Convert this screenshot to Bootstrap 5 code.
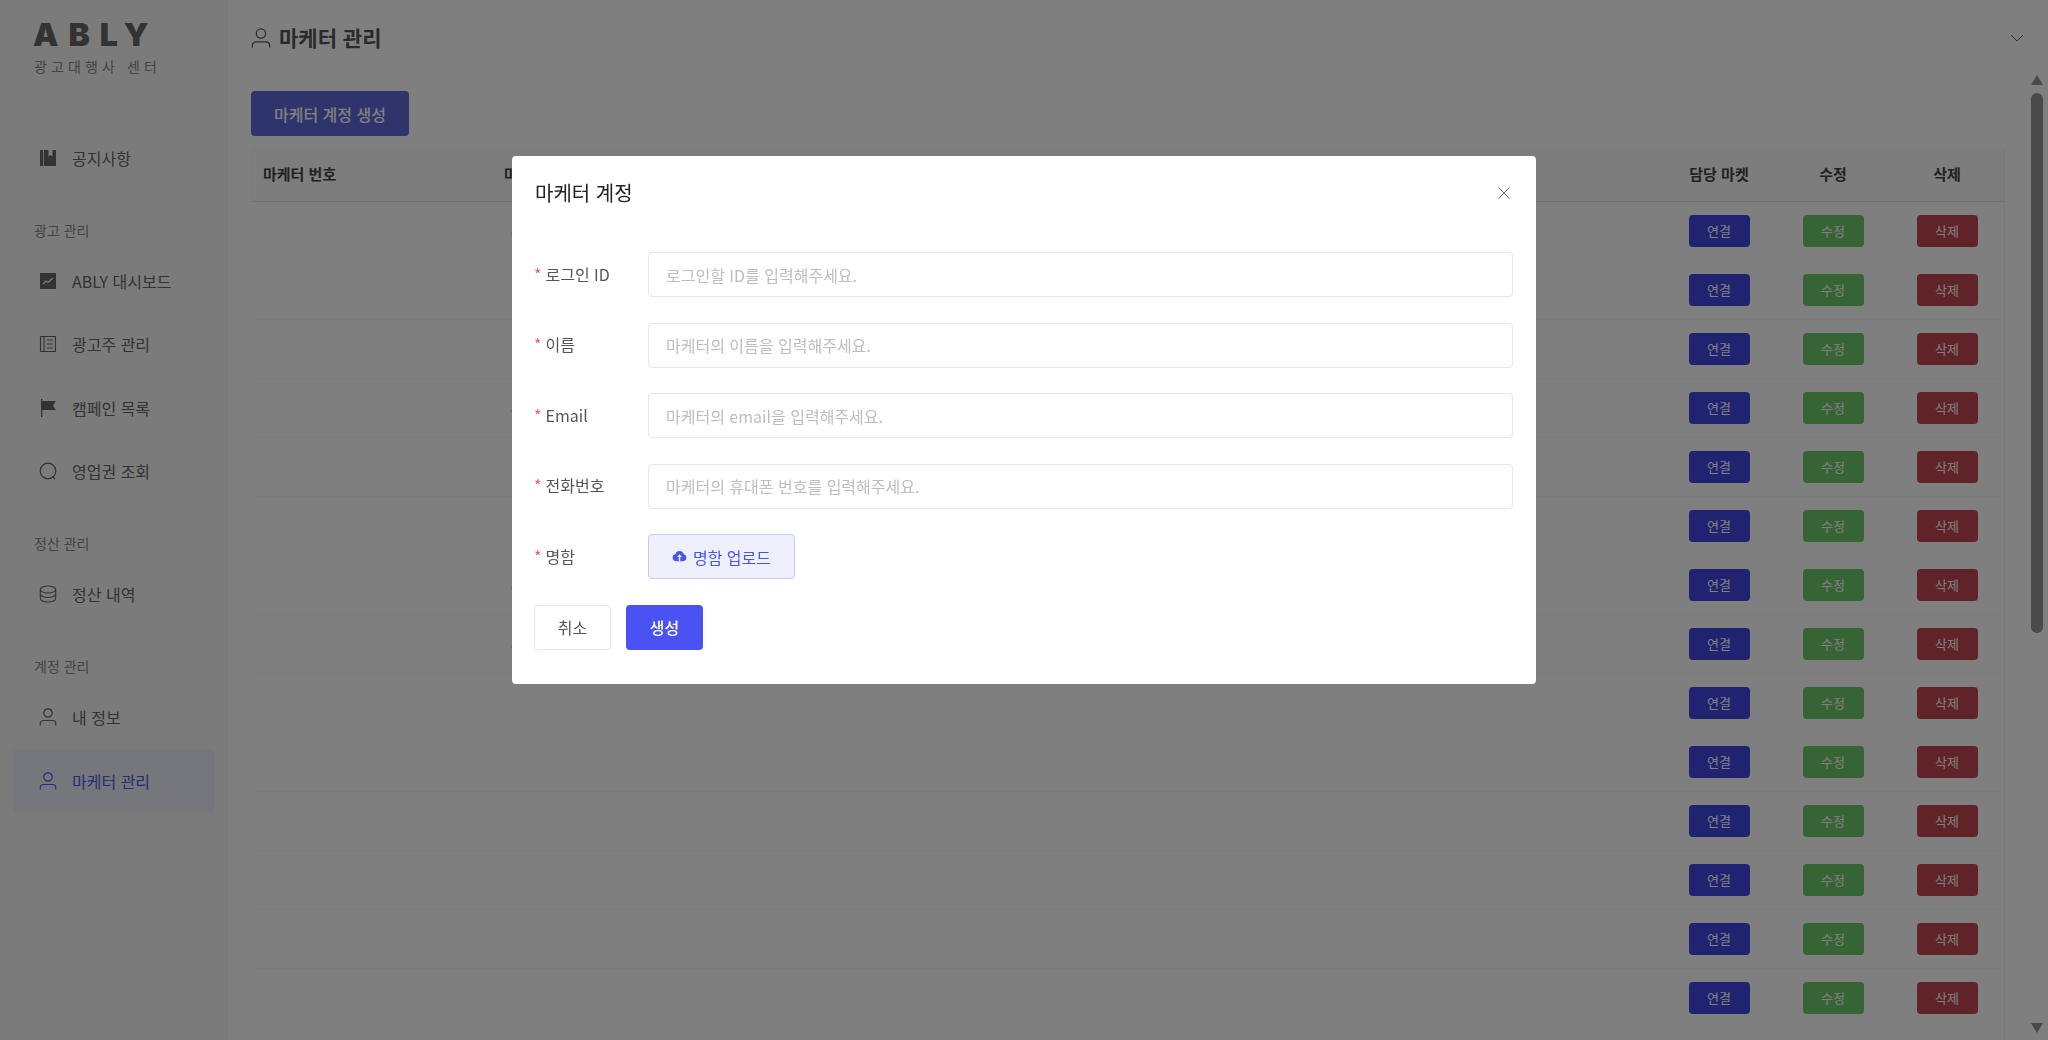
<!DOCTYPE html>
<html lang="ko">
<head>
  <meta charset="UTF-8"/>
  <meta name="viewport" content="width=device-width, initial-scale=1.0"/>
  <title>ABLY - 마케터 관리</title>
  <link href="https://cdn.jsdelivr.net/npm/bootstrap@5.3.0/dist/css/bootstrap.min.css" rel="stylesheet"/>
  <style>
    body {
      font-family: "Noto Sans CJK KR", "Noto Sans", sans-serif;
      height: 100vh;
      overflow: hidden;
      background: #fff;
      color: #555;
    }

    /* sidebar */
    .side-panel {
      width: 228px;
      flex-shrink: 0;
      background: #f7f7f8;
      height: 100vh;
    }
    .brand-block { height: 126px; padding: 18px 0 0 33px; }
    .brand-logo {
      font-family: Inter, sans-serif;
      font-weight: 900;
      font-size: 32px;
      line-height: 34px;
      letter-spacing: 10px;
      color: #666;
    }
    .brand-sub {
      font-size: 14px;
      line-height: 20px;
      letter-spacing: 4.1px;
      margin: 4px 0 0 1px;
      color: #888;
    }
    .menu-label {
      height: 59.2px;
      padding: 30px 0 0 34px;
      font-size: 14px;
      line-height: 20px;
      color: #888;
    }
    .menu-entry {
      height: 63.6px;
      padding-left: 39px;
      font-size: 16px;
      color: #666;
      gap: 15px;
    }
    .menu-entry svg { width: 18px; height: 18px; flex-shrink: 0; }
    .menu-entry.is-active {
      background: #eceefb;
      color: #5058e8;
      margin: 0 13px;
      padding-left: 26px;
      border-radius: 4px;
    }

    /* main */
    .top-bar { height: 75px; padding: 0 24px 0 23px; }
    .page-title { font-size: 21px; font-weight: 700; color: #555; gap: 8px; }
    .page-title svg { width: 20px; height: 20px; }
    .top-chevron { width: 14px; height: 14px; color: #666; }
    .content-area { padding-left: 23px; }
    .create-btn {
      height: 45px;
      width: 158px;
      margin-top: 16px;
      padding: 0;
      font-size: 16px;
      font-weight: 500;
      background: #6068d8;
      border: 0;
      border-radius: 4px;
      color: #fff;
    }
    .table-wrap {
      width: 1754px;
      margin-top: 12px;
      border-right: 1px solid #f0f0f0;
    }
    .mkt-table { table-layout: fixed; width: 1753px; border-color: #f8f8f8; }
    .mkt-table th {
      --bs-table-bg: #fafafa;
      height: 53px;
      padding: 0 12px;
      font-size: 15px;
      font-weight: 700;
      color: #444;
      vertical-align: middle;
      border-color: #e8e8e8;
    }
    .mkt-table td {
      height: 59px;
      padding: 0;
      font-size: 14px;
      color: #555;
      text-align: center;
      vertical-align: middle;
    }
    .mkt-table td.id-cell { padding-left: 19px; text-align: left; }
    .row-btn {
      width: 61px;
      height: 32px;
      padding: 0;
      font-size: 13px;
      border: 0;
      border-radius: 4px;
      color: #fff;
    }
    .row-btn-link { background: #4048e0; }
    .row-btn-edit { background: #6fc868; }
    .row-btn-del { background: #c04650; }

    /* fake scrollbar */
    .scroll-rail { width: 12px; margin: 0 5px 0 26px; }
    .arrow-up, .arrow-down {
      width: 0;
      height: 0;
      border-left: 6px solid transparent;
      border-right: 6px solid transparent;
    }
    .arrow-up { border-bottom: 10px solid #949494; }
    .arrow-down { border-top: 10px solid #949494; margin-top: 390px; }
    .scroll-thumb { height: 540px; margin-top: 8px; background: #949494; border-radius: 6px; }

    /* modal */
    .acct-dialog { max-width: 1024px; margin: 156px auto 0; }
    .acct-content { border: 0; border-radius: 4px; }
    .acct-head { height: 72px; padding: 2px 24px 0 23px; border: 0; }
    .acct-title { font-size: 20px; font-weight: 400; color: #222; }
    .acct-close { width: 16px; height: 16px; padding: 0; background: none; border: 0; color: #666; }
    .acct-body { padding: 24px 23px 34px 22px; }
    .field-row { margin-bottom: 25.5px; }
    .field-label { width: 114px; flex-shrink: 0; font-size: 16px; line-height: 22px; padding-bottom: 2px; color: #555; margin: 0; }
    .field-label i { font-style: normal; color: #e35d6a; margin-right: 4px; }
    .field-input {
      height: 45px;
      font-size: 16px;
      padding: 0 17px;
      border-color: #e6e6e6;
      border-radius: 4px;
    }
    .field-input::placeholder { color: #bdbdbd; }
    .upload-btn {
      height: 45px;
      width: 147px;
      padding: 0;
      font-size: 16px;
      background: #eef0fe;
      border: 1px solid #c6caf6;
      border-radius: 4px;
      color: #4a52f0;
      gap: 6px;
    }
    .form-actions { gap: 15px; }
    .cancel-btn, .save-btn { height: 45px; padding: 0; font-size: 16px; border-radius: 4px; }
    .cancel-btn { width: 77px; background: #fff; border: 1px solid #e6e6e6; color: #555; }
    .save-btn { width: 77px; background: #4a52f4; border: 0; color: #fff; font-weight: 500; }
  </style>
</head>
<body class="d-flex">
  <!-- Sidebar -->
  <aside class="side-panel">
    <div class="brand-block">
      <div class="brand-logo">ABLY</div>
      <div class="brand-sub">광고대행사 센터</div>
    </div>
    <div class="menu-entry d-flex align-items-center">
      <svg viewBox="0 0 18 18" fill="currentColor"><path d="M1 1h3.2v16H1zM5 1h4.5v6.5l2-1.5 2 1.5V1H17v16H5z"/></svg>공지사항
    </div>
    <div class="menu-label">광고 관리</div>
    <div class="menu-entry d-flex align-items-center">
      <svg viewBox="0 0 18 18"><path fill="currentColor" d="M1 1h16v16H1z"/><path fill="none" stroke="#f7f7f8" stroke-width="1.2" d="M4 12l3-3 2 1.5L14 6"/></svg>ABLY 대시보드
    </div>
    <div class="menu-entry d-flex align-items-center">
      <svg viewBox="0 0 18 18" fill="none" stroke="currentColor" stroke-width="1.1"><path d="M1.5 1.5h15v15h-15zM5 1.5v15M8 5h6M8 9h6M8 13h6"/></svg>광고주 관리
    </div>
    <div class="menu-entry d-flex align-items-center">
      <svg viewBox="0 0 18 18" fill="currentColor"><path d="M2 0h1.3v18H2zM3.3 2H17l-3 4.5L17 11H3.3z"/></svg>캠페인 목록
    </div>
    <div class="menu-entry d-flex align-items-center">
      <svg viewBox="0 0 18 18" fill="none" stroke="currentColor" stroke-width="1.2"><circle cx="9" cy="9" r="7.8"/><path d="M13.5 14.5l2.5 2.5"/></svg>영업권 조회
    </div>
    <div class="menu-label">정산 관리</div>
    <div class="menu-entry d-flex align-items-center">
      <svg viewBox="0 0 18 18" fill="none" stroke="currentColor" stroke-width="1.1"><ellipse cx="9" cy="4.5" rx="7.7" ry="3.5"/><path d="M1.3 4.5v9c0 1.9 3.4 3.5 7.7 3.5s7.7-1.6 7.7-3.5v-9M1.3 9c0 1.9 3.4 3.5 7.7 3.5s7.7-1.6 7.7-3.5"/></svg>정산 내역
    </div>
    <div class="menu-label">계정 관리</div>
    <div class="menu-entry d-flex align-items-center">
      <svg viewBox="0 0 18 18" fill="none" stroke="currentColor" stroke-width="1.2"><circle cx="9" cy="5" r="4.2"/><path d="M1.2 17.5v-1.7c0-2 1.6-3.3 3.5-3.3h8.6c1.9 0 3.5 1.3 3.5 3.3v1.7"/></svg>내 정보
    </div>
    <div class="menu-entry is-active d-flex align-items-center">
      <svg viewBox="0 0 18 18" fill="none" stroke="currentColor" stroke-width="1.2"><circle cx="9" cy="5" r="4.2"/><path d="M1.2 17.5v-1.7c0-2 1.6-3.3 3.5-3.3h8.6c1.9 0 3.5 1.3 3.5 3.3v1.7"/></svg>마케터 관리
    </div>
  </aside>

  <!-- Main -->
  <main class="flex-grow-1 d-flex flex-column overflow-hidden">
    <div class="top-bar d-flex align-items-center justify-content-between">
      <h1 class="page-title d-flex align-items-center m-0">
        <svg viewBox="0 0 18 18" fill="none" stroke="currentColor" stroke-width="1.1"><circle cx="9" cy="5" r="4.2"/><path d="M1.2 17.5v-1.7c0-2 1.6-3.3 3.5-3.3h8.6c1.9 0 3.5 1.3 3.5 3.3v1.7"/></svg>
        마케터 관리
      </h1>
      <svg class="top-chevron" viewBox="0 0 14 14" fill="none" stroke="currentColor" stroke-width="1"><path d="M1 4l6 6 6-6"/></svg>
    </div>
    <div class="d-flex flex-grow-1 overflow-hidden content-area">
      <div class="d-flex flex-column align-items-start">
        <button class="btn create-btn">마케터 계정 생성</button>
        <div class="table-wrap flex-grow-1">
          <table class="table mkt-table mb-0">
            <colgroup>
              <col style="width: 241px"/><col style="width: 220px"/><col style="width: 300px"/><col style="width: 350px"/><col style="width: 300px"/><col style="width: 114px"/><col style="width: 114px"/><col style="width: 114px"/>
            </colgroup>
            <thead>
              <tr>
                <th>마케터 번호</th>
                <th>마케터 ID</th>
                <th>이름</th>
                <th>Email</th>
                <th>전화번호</th>
                <th class="text-center">담당 마켓</th>
                <th class="text-center">수정</th>
                <th class="text-center">삭제</th>
              </tr>
            </thead>
            <tbody id="marketer-rows"></tbody>
          </table>
        </div>
      </div>
      <div class="scroll-rail">
        <div class="arrow-up"></div>
        <div class="scroll-thumb"></div>
        <div class="arrow-down"></div>
      </div>
    </div>
  </main>

  <!-- Modal -->
  <div class="modal-backdrop show"></div>
  <div class="modal d-block" tabindex="-1">
    <div class="modal-dialog acct-dialog">
      <div class="modal-content acct-content">
        <div class="modal-header acct-head d-flex align-items-center justify-content-between">
          <h5 class="modal-title acct-title">마케터 계정</h5>
          <button class="acct-close d-flex" aria-label="닫기">
            <svg viewBox="0 0 16 16" width="16" height="16" fill="none" stroke="currentColor" stroke-width="1"><path d="M2.5 2.5l11 11M13.5 2.5l-11 11"/></svg>
          </button>
        </div>
        <div class="modal-body acct-body">
          <div class="field-row d-flex align-items-center">
            <label class="field-label"><i>*</i>로그인 ID</label>
            <input class="form-control field-input" placeholder="로그인할 ID를 입력해주세요."/>
          </div>
          <div class="field-row d-flex align-items-center">
            <label class="field-label"><i>*</i>이름</label>
            <input class="form-control field-input" placeholder="마케터의 이름을 입력해주세요."/>
          </div>
          <div class="field-row d-flex align-items-center">
            <label class="field-label"><i>*</i>Email</label>
            <input class="form-control field-input" placeholder="마케터의 email을 입력해주세요."/>
          </div>
          <div class="field-row d-flex align-items-center">
            <label class="field-label"><i>*</i>전화번호</label>
            <input class="form-control field-input" placeholder="마케터의 휴대폰 번호를 입력해주세요."/>
          </div>
          <div class="field-row d-flex align-items-center">
            <label class="field-label"><i>*</i>명함</label>
            <button class="btn upload-btn d-flex align-items-center justify-content-center">
              <svg viewBox="0 0 16 14" width="15" height="13" fill="currentColor"><path d="M8 1a4.6 4.6 0 0 1 4.4 3.5A3.8 3.8 0 0 1 12 12H4a3.8 3.8 0 0 1-.4-7.5A4.6 4.6 0 0 1 8 1z"/><path fill="#eef0fe" d="M8 4.5L5.3 7.6h1.9V12h1.6V7.6h1.9z"/></svg>
              명함 업로드
            </button>
          </div>
          <div class="form-actions d-flex">
            <button class="btn cancel-btn">취소</button>
            <button class="btn save-btn">생성</button>
          </div>
        </div>
      </div>
    </div>
  </div>

  <script>
    // rows 1, 4, 7 and 8 have an id that peeks out left of the modal
    const ids = ['abc', '', '', 'abc', '', '', 'abc', 'abc', '', '', '', '', '', ''];
    const tbody = document.getElementById('marketer-rows');
    ids.forEach(id => {
      const tr = document.createElement('tr');
      tr.innerHTML = `
        <td></td>
        <td class="id-cell">${id}</td>
        <td></td>
        <td></td>
        <td></td>
        <td><button class="btn row-btn row-btn-link">연결</button></td>
        <td><button class="btn row-btn row-btn-edit">수정</button></td>
        <td><button class="btn row-btn row-btn-del">삭제</button></td>
      `;
      tbody.appendChild(tr);
    });
  </script>
</body>
</html>
